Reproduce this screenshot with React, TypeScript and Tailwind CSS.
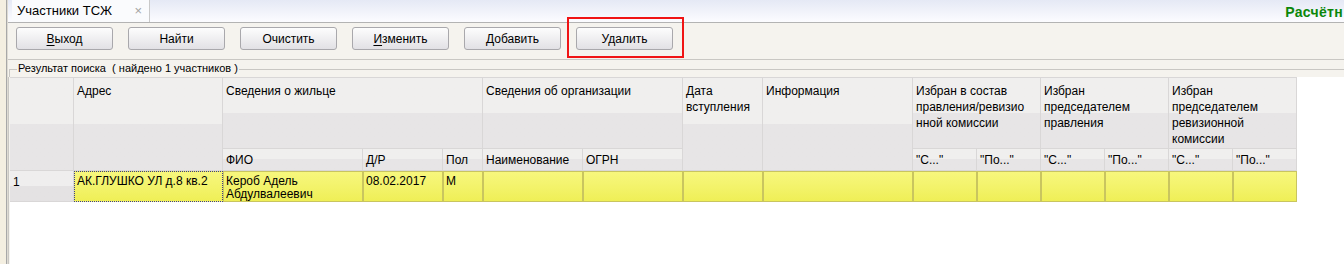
import React from 'react';

// header cell look: two-tone grey, like the old grid control
const hd =
  'border-r border-b border-[#d9d7d7] bg-linear-to-b from-[#f0efee] from-50% to-[#e7e5e6] to-50% px-[3px] leading-4 text-black overflow-hidden whitespace-nowrap';
const yc =
  'border border-[#c9c55f] bg-linear-to-b from-[#f7f77d] to-[#efef56] px-[2px] pt-[3px] leading-[13px] text-black overflow-hidden whitespace-nowrap';

const buttons: { label: string; key?: number }[] = [
  { label: 'Выход', key: 0 },
  { label: 'Найти' },
  { label: 'Очистить' },
  { label: 'Изменить', key: 0 },
  { label: 'Добавить' },
  { label: 'Удалить' },
];

const ToolButton = ({ label, accel }: { label: string; accel?: number }) => (
  <button
    type="button"
    className="w-[97px] h-[23px] shrink-0 rounded-[3px] border border-[#a9a8ac] bg-linear-to-b from-[#fdfdfd] to-[#e2e1e5] text-[12px] leading-none text-black"
  >
    {accel === undefined ? (
      label
    ) : (
      <>
        <span className="underline underline-offset-2">{label[accel]}</span>
        {label.slice(accel + 1)}
      </>
    )}
  </button>
);

export default function App() {
  return (
    <div className="relative w-[1344px] h-[264px] overflow-hidden flex bg-white font-['Liberation_Sans',Arial,sans-serif] text-[12px]">
      {/* left dock edge */}
      <div className="w-[7px] shrink-0 bg-[#f4efe1] border-r border-[#a8a8a8]" />

      <div className="flex-1 flex flex-col border-l border-[#dedbd3] min-w-0">
        {/* tab strip */}
        <div className="h-[23px] shrink-0 flex border-b border-[#b3b3b3] bg-linear-to-b from-[#e5e9f5] to-[#fcfcff]">
          <div className="ml-[4px] w-[138px] flex items-center justify-between pl-[5px] pr-[7px] bg-[#fafbfd] border-r border-[#c9c9c9]">
            <span className="text-[13px] text-black">Участники ТСЖ</span>
            <span className="text-[13px] text-[#a3a3a3]">×</span>
          </div>
          <div className="flex-1" />
          <div className="shrink-0 whitespace-nowrap pt-[2px] pr-[1px] text-[14px] font-bold tracking-[0.3px] text-[#0a870a]">
            Расчётн
          </div>
        </div>

        {/* toolbar */}
        <div className="h-[37px] shrink-0 flex gap-[15px] pl-[8px] pt-[4px] bg-[#f5f3ee] border-b border-[#c9c7c3]">
          {buttons.map((b) => (
            <ToolButton key={b.label} label={b.label} accel={b.key} />
          ))}
        </div>

        {/* group box */}
        <div className="flex-1 flex flex-col bg-[#f5f3ee]">
          <div className="h-[17px] shrink-0 flex">
            <div className="w-[8px] mt-[9px] ml-[1px] border-t border-l border-[#c9c7c3]" />
            <span className="px-[1px] pt-[2px] text-[11px] leading-[13px] text-black whitespace-pre">
              Результат поиска  ( найдено 1 участников )
            </span>
            <div className="flex-1 mt-[9px] border-t border-[#c9c7c3]" />
          </div>

          <div className="flex-1 flex">
            <div className="w-[2px] shrink-0 border-l border-[#c9c7c3]" />
            <div className="flex-1 bg-white">
              <div className="grid w-max grid-cols-[64px_149px_140px_80px_40px_100px_100px_80px_150px_64px_64px_64px_64px_64px_64px] grid-rows-[71px_22px_31px] border-t border-[#d9d7d7]">
                {/* header, first level */}
                <div className={`${hd} row-span-2`} />
                <div className={`${hd} row-span-2 pt-[5px]`}>Адрес</div>
                <div className={`${hd} col-span-3 pt-[5px]`}>Сведения о жильце</div>
                <div className={`${hd} col-span-2 pt-[5px]`}>Сведения об организации</div>
                <div className={`${hd} row-span-2 pt-[5px]`}>
                  Дата
                  <br />
                  вступления
                </div>
                <div className={`${hd} row-span-2 pt-[5px]`}>Информация</div>
                <div className={`${hd} col-span-2 pt-[5px]`}>
                  Избран в состав
                  <br />
                  правления/ревизио
                  <br />
                  нной комиссии
                </div>
                <div className={`${hd} col-span-2 pt-[5px]`}>
                  Избран
                  <br />
                  председателем
                  <br />
                  правления
                </div>
                <div className={`${hd} col-span-2 pt-[5px]`}>
                  Избран
                  <br />
                  председателем
                  <br />
                  ревизионной
                  <br />
                  комиссии
                </div>

                {/* header, second level */}
                {['ФИО', 'Д/Р', 'Пол', 'Наименование', 'ОГРН', '"С..."', '"По..."', '"С..."', '"По..."', '"С..."', '"По..."'].map(
                  (t, i) => (
                    <div key={i} className={`${hd} pt-[3px]`}>
                      {t}
                    </div>
                  )
                )}

                {/* data row */}
                <div className="border-r border-b border-[#d9d7d7] bg-linear-to-b from-[#efeeee] from-50% to-[#e4e2e3] to-50% px-[3px] pt-[5px] leading-[13px]">
                  1
                </div>
                <div className="border border-dotted border-[#3c3c8c] bg-linear-to-b from-[#f7f77d] to-[#efef56] px-[2px] pt-[3px] leading-[13px] whitespace-nowrap overflow-hidden">
                  АК.ГЛУШКО УЛ д.8 кв.2
                </div>
                <div className={yc}>
                  Кероб Адель
                  <br />
                  Абдулвалеевич
                </div>
                <div className={yc}>08.02.2017</div>
                <div className={yc}>М</div>
                {Array.from({ length: 10 }).map((_, i) => (
                  <div key={i} className={yc} />
                ))}
              </div>
            </div>
          </div>
        </div>
      </div>

      {/* red annotation frame around "Удалить" */}
      <div className="absolute left-[567px] top-[17px] w-[117px] h-[41px] border-2 border-[#f01414] pointer-events-none" />
    </div>
  );
}
